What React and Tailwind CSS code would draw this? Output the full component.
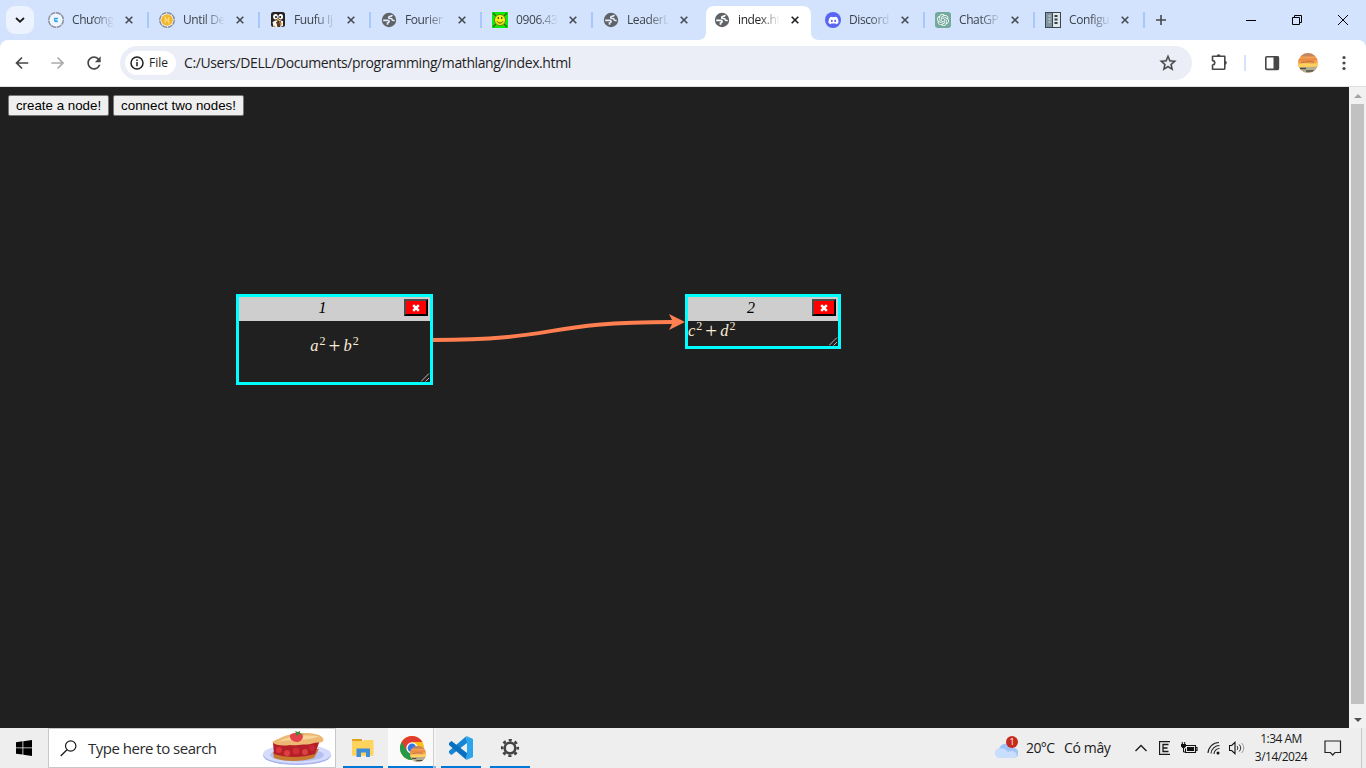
import React from "react";
import { FaDiscord } from "react-icons/fa";
import { SiOpenai } from "react-icons/si";

function Globe({ patch = "#e3ecfd" }) {
  return (
    <svg width="16" height="16" viewBox="0 0 16 16">
      <circle cx="8" cy="8" r="7.200" fill="#5f6368" />
      <path d="M2.200 8.300h4.300c1.300 0 1.600.6 1.600 1.300 0 .9-.5 1.300-1.600 1.400v1.800" fill="none" stroke={patch} strokeWidth="1.700" />
      <path d="M11.200 2.900c-.3 1-1 1.300-2 1.300-1 0-1.500.5-1.500 1.200 0 .8.600 1.100 1.500 1.100h.9c.7 0 1 .5 1 1.100s.5.900 1.100.9h1.500" fill="none" stroke={patch} strokeWidth="1.600" />
    </svg>
  );
}

function RingIcon({ children }) {
  return (
    <svg width="16" height="16" viewBox="0 0 16 16">
      <circle cx="8" cy="8" r="7" fill="#eef5ff" />
      <circle cx="8" cy="8" r="7.300" fill="none" stroke="#858b93" strokeWidth="1.400" strokeDasharray="5 .7" />
      {children}
    </svg>
  );
}

const icons = {
  chuong: (
    <RingIcon>
      <path d="M6 6.300h4M6.500 6.500c-.2 3 1.200 3.700 3.300 2.900M7.500 8.100h1.800" stroke="#36a9e8" strokeWidth="1.300" fill="none" />
    </RingIcon>
  ),
  until: (
    <RingIcon>
      <circle cx="8" cy="8" r="5.800" fill="#f5b52a" />
      <path d="M6.300 11V5.500l3.400 5V5" stroke="#fbdc7c" strokeWidth="1.300" fill="none" />
    </RingIcon>
  ),
  fuufu: (
    <svg width="16" height="16" viewBox="0 0 16 16">
      <rect x="1" y="0" width="14" height="15" rx="2.500" fill="#282223" />
      <ellipse cx="5.500" cy="4.700" rx="2.400" ry="2.700" fill="#fff" />
      <ellipse cx="10.700" cy="4.700" rx="2.300" ry="2.700" fill="#fff" />
      <path d="M2.500 10l4-2 1 2v5H3.500zM9 8l4 1v5l-3 1z" fill="#f7f3ee" />
      <circle cx="6" cy="5" r="1" fill="#111" />
      <circle cx="10.200" cy="5" r="1" fill="#111" />
      <path d="M6.500 6.500h3.300L8.500 9h-1z" fill="#e89a32" />
      <path d="M6 10l5-1-.5 5-3 .5z" fill="#5a3a26" />
      <path d="M9 10l3 1-1 3zM3 15l1.500-1.500L6 15z" fill="#d38a35" />
    </svg>
  ),
  smile: (
    <svg width="16" height="16" viewBox="0 0 16 16">
      <rect width="16" height="16" fill="#0bec10" />
      <path d="M1 1l3 3M15 1l-3 3M1 15l3-3M15 15l-3-3" stroke="#4b5a08" strokeWidth="1.400" />
      <circle cx="8" cy="8" r="5.500" fill="#f7ef18" stroke="#6c6b10" strokeWidth=".8" />
      <path d="M5 9.300c1 2.300 5 2.300 6 0" stroke="#4f430c" fill="none" />
      <path d="M6.300 5v2M9.700 5v2" stroke="#4f430c" strokeWidth="1.200" />
    </svg>
  ),
  globe: <Globe />,
  globeActive: <Globe patch="#ffffff" />,
  discord: (
    <span className="flex h-4 w-4 items-center justify-center rounded-full bg-[#5865f2]">
      <FaDiscord size={11} color="#fff" />
    </span>
  ),
  chatgpt: (
    <span className="flex h-4 w-4 items-center justify-center rounded-[3px] bg-[#74aa9c]">
      <SiOpenai size={12} color="#fff" />
    </span>
  ),
  config: (
    <svg width="16" height="16" viewBox="0 0 16 16">
      <rect x=".5" y=".5" width="15" height="15" fill="#dfe7ea" stroke="#3a4650" />
      <rect x="1" y="1" width="6" height="14" fill="#8296a0" />
      <path d="M7.500 0v16" stroke="#3a4650" />
      <path d="M3.500 4h2M3.500 7h2M3.500 10h2" stroke="#dfe7ea" />
      <path d="M9.500 4h3M9.500 7.500h3M9.500 11h3" stroke="#333f48" strokeWidth="1.800" />
    </svg>
  ),
};

const tabs = [
  { icon: "chuong", text: "Chương", sep: true, w: "w-[111px]" },
  { icon: "until", text: "Until De", sep: true, w: "w-[111px]" },
  { icon: "fuufu", text: "Fuufu Ij", sep: true, w: "w-[111px]" },
  { icon: "globe", text: "Fourier", sep: true, w: "w-[111px]" },
  { icon: "smile", text: "0906.43", sep: true, w: "w-[111px]" },
  { icon: "globe", text: "LeaderL", sep: false, w: "w-[111px]" },
  { icon: "globeActive", text: "index.ht", active: true, w: "w-[111px]" },
  { icon: "discord", text: "Discord", sep: true, w: "w-[110px]", gap: "ml-[10px]" },
  { icon: "chatgpt", text: "ChatGP", sep: true, w: "w-[110px]", gap: "ml-[10px]" },
  { icon: "config", text: "Configu", sep: true, w: "w-[110px]", gap: "ml-[10px]" },
];

function Tab({ icon, text, sep, active, w, gap = "ml-[11px]" }) {
  return (
    <div className={`relative flex h-10 shrink-0 items-center pl-[10px] ${w}`}>
      {active && (
        <svg className="absolute left-[-6px] top-[6px]" width="122" height="34" viewBox="0 0 122 34">
          <path d="M0 34c5 0 8-3 8-8V9c0-6 3-9 9-9h87c6 0 9 3 9 9v17c0 5 3 8 8 8z" fill="#fff" />
        </svg>
      )}
      <span className="relative h-4 w-4 shrink-0">{icons[icon]}</span>
      <span
        className={`relative ml-2 w-[42px] whitespace-nowrap text-[12px] leading-[18px] tracking-[-0.4px] [mask-image:linear-gradient(to_right,#000_50%,transparent)] ${
          active ? "text-[#1f1f1f]" : "text-[#3d434b]"
        }`}
      >
        {text}
      </span>
      <svg className={`relative shrink-0 ${gap}`} width="8" height="8" viewBox="0 0 8 8">
        <path d="M.7.7l6.600 6.600M7.300.7L.7 7.300" stroke={active ? "#1f1f1f" : "#474b52"} strokeWidth="1.600" />
      </svg>
      {sep && <span className="absolute right-0 top-3 h-4 w-[2px] bg-[#a8c7fa]" />}
    </div>
  );
}

function Avatar({ size }) {
  return (
    <svg width={size} height={size} viewBox="0 0 20 20">
      <clipPath id={`av${size}`}>
        <circle cx="10" cy="10" r="10" />
      </clipPath>
      <g clipPath={`url(#av${size})`}>
        <rect width="20" height="20" fill="#f2a452" />
        <rect width="20" height="3.500" fill="#c48660" />
        <path d="M0 6c6-2 13 1 20-2v3c-7 2-13 0-20 2z" fill="#ee8c46" />
        <path d="M0 11.500c8-3 14 1 20-2v4.500H0z" fill="#ffd15c" />
        <path d="M3 9.500l8-1 5 .5" stroke="#a85f3a" strokeWidth=".8" fill="none" />
        <path d="M0 14.500l20-1V20H0z" fill="#b5ad93" />
        <path d="M2 15.500h6M8 18h8" stroke="#4b5044" strokeWidth="1.300" />
      </g>
    </svg>
  );
}

function Toolbar() {
  return (
    <div className="h-[47px] bg-[#d3e2fd]">
      <div className="flex h-[47px] items-center rounded-t-[8px] border-b border-[#dedfe3] bg-white pl-3">
        <svg width="20" height="20" viewBox="0 0 24 24" fill="#474747">
          <path d="M19.500 11H7.830l4.900-4.900L11.300 4.700 4 12l7.300 7.300 1.430-1.400L7.830 13H19.500z" />
        </svg>
        <svg className="ml-4" width="20" height="20" viewBox="0 0 24 24" fill="#ababab">
          <path d="M4 11h11.670l-4.900-4.900 1.430-1.400 7.300 7.300-7.300 7.300-1.430-1.400 4.900-4.900H4z" />
        </svg>
        <svg className="ml-4" width="20" height="20" viewBox="0 0 24 24" fill="#474747">
          <path d="M17.650 6.350C16.200 4.900 14.210 4 12 4c-4.420 0-7.990 3.580-7.990 8s3.570 8 7.990 8c3.730 0 6.840-2.550 7.730-6h-2.080c-.82 2.330-3.040 4-5.650 4-3.310 0-6-2.690-6-6s2.690-6 6-6c1.660 0 3.140.69 4.220 1.780L13 11h7V4l-2.350 2.350z" />
        </svg>
        <div className="ml-4 flex h-[34px] w-[1072px] items-center rounded-full bg-[#ebeef7] pl-[5px] pr-[14px]">
          <div className="flex h-6 w-[51px] items-center rounded-full bg-white pl-[5px]">
            <svg width="14" height="14" viewBox="0 0 14 14">
              <circle cx="7" cy="7" r="6" fill="none" stroke="#1f1f1f" strokeWidth="1.500" />
              <path d="M7 6v4.300M7 3.600v1.400" stroke="#1f1f1f" strokeWidth="1.500" />
            </svg>
            <span className="ml-[5px] text-[12px] leading-4 text-[#1f1f1f]">File</span>
          </div>
          <span className="ml-2 flex-1 whitespace-nowrap text-[14px] leading-5 tracking-[-0.4px] text-[#1f1f1f]">
            C:/Users/DELL/Documents/programming/mathlang/index.html
          </span>
          <svg width="20" height="20" viewBox="0 0 24 24" fill="#474747" stroke="#474747" strokeWidth=".3">
            <path d="M22 9.240l-7.190-.62L12 2 9.190 8.630 2 9.240l5.460 4.730L5.820 21 12 17.270 18.180 21l-1.630-7.030L22 9.240zM12 15.400l-3.760 2.270 1-4.280-3.320-2.880 4.380-.38L12 6.100l1.710 4.040 4.380.38-3.320 2.880 1 4.280L12 15.400z" />
          </svg>
        </div>
        <svg className="ml-[17px]" width="20" height="20" viewBox="0 0 20 20">
          <path
            d="M3.800 3.300h12v11.900a1 1 0 0 1-1 1H3.500v-4.100a2.200 2.200 0 0 0 0-4.500V3.500z"
            fill="none"
            stroke="#474747"
            strokeWidth="1.600"
            strokeLinejoin="round"
          />
          <path d="M7.600 3.300a2 2 0 0 1 4 0zM15.800 7.700a2 2 0 0 1 0 4z" fill="#474747" />
        </svg>
        <span className="ml-[15px] h-4 w-[2px] bg-[#d3e2fd]" />
        <svg className="ml-[18px]" width="16" height="16" viewBox="0 0 16 16">
          <rect x="1.800" y="1.800" width="12.600" height="12.600" rx="1" fill="none" stroke="#474747" strokeWidth="1.600" />
          <path d="M9.500 1.500h5v13h-5z" fill="#474747" />
        </svg>
        <span className="ml-[18px]">
          <Avatar size={20} />
        </span>
        <svg className="ml-[24px]" width="4" height="16" viewBox="0 0 4 16" fill="#474747">
          <circle cx="2" cy="2.500" r="1.600" />
          <circle cx="2" cy="8" r="1.600" />
          <circle cx="2" cy="13.500" r="1.600" />
        </svg>
      </div>
    </div>
  );
}

function TabStrip() {
  return (
    <div className="flex h-10 items-center bg-[#d3e2fd] pl-[6px]">
      <span className="mr-1 flex h-7 w-7 shrink-0 items-center justify-center rounded-[9px] bg-[#ecf2fe]">
        <svg width="10" height="6" viewBox="0 0 10 6">
          <path d="M1 1l4 3.700L9 1" fill="none" stroke="#1f1f1f" strokeWidth="1.800" />
        </svg>
      </span>
      {tabs.map((t, i) => (
        <Tab key={i} {...t} />
      ))}
      <svg className="ml-[11px]" width="10" height="10" viewBox="0 0 10 10">
        <path d="M5 0v10M0 5h10" stroke="#474747" strokeWidth="1.600" />
      </svg>
      <svg className="ml-20" width="10" height="10" viewBox="0 0 10 10">
        <path d="M0 5.500h10" stroke="#000" />
      </svg>
      <svg className="ml-9" width="10" height="10" viewBox="0 0 10 10">
        <path d="M.5 2.500h7v7h-7zM2.500 2.500v-2h7v7h-2" fill="none" stroke="#000" />
      </svg>
      <svg className="ml-9" width="10" height="10" viewBox="0 0 10 10">
        <path d="M0 0l10 10M10 0L0 10" stroke="#000" />
      </svg>
    </div>
  );
}

function MathNode({ title, box, a, b, body }) {
  return (
    <div className={`absolute flex flex-col border-[3px] border-[#00ffff] bg-[#202020] ${box}`}>
      <div className="flex h-6 shrink-0 items-start bg-[#cecece]">
        <span className="flex-1 pl-[2px] text-center font-['Liberation_Serif',serif] text-[16px] italic leading-[22px] text-black">{title}</span>
        <button className="mr-[2px] mt-[2px] flex h-[17px] w-[24px] items-center justify-center border-2 border-b-black border-l-[#4c4c4c] border-r-black border-t-[#4c4c4c] bg-[#ff0000]">
          <svg width="8" height="8" viewBox="0 0 8 8">
            <path d="M1.200 1.200l5.600 5.600M6.800 1.200L1.200 6.800" stroke="#fff" strokeWidth="2.500" />
          </svg>
        </button>
      </div>
      <div className={`flex h-5 items-center font-['Liberation_Serif',serif] text-[16.500px] leading-[20px] text-[#faebd7] ${body}`}>
        <i>{a}</i>
        <sup className="-top-[5px] ml-px text-[12px] leading-none">2</sup>
        <span className="ml-[3px] mr-[3px] text-[21px] leading-5">+</span>
        <i>{b}</i>
        <sup className="-top-[5px] ml-px text-[12px] leading-none">2</sup>
      </div>
      <svg className="absolute bottom-0 right-0" width="9" height="9" viewBox="0 0 9 9">
        <path d="M0 8.500L8 .5M4.500 8.500L8 5" stroke="#c8c8c8" strokeWidth=".9" />
      </svg>
    </div>
  );
}

function PageView() {
  return (
    <div className="flex h-[641px]">
      <div className="relative flex-1 bg-[#202020] pl-2 pt-2">
        <div className="flex gap-1 font-['Liberation_Sans',Arial,sans-serif] text-[13.333px] leading-[15px] text-black">
          <button className="h-[21px] w-[101px] whitespace-nowrap rounded-[2px] border border-[#767676] bg-[#efefef]">create a node!</button>
          <button className="h-[21px] w-[131px] whitespace-nowrap rounded-[2px] border border-[#767676] bg-[#efefef]">connect two nodes!</button>
        </div>
        <svg className="absolute left-[433px] top-[220px]" width="254" height="40" viewBox="0 0 254 40">
          <path d="M0 33C126 33 110 15 240 15" fill="none" stroke="#ff7f50" strokeWidth="4" />
          <path d="M252 15l-16-8 4 8-4 8z" fill="#ff7f50" />
        </svg>
        <MathNode title="1" a="a" b="b" box="left-[236px] top-[207px] h-[91px] w-[197px]" body="mt-[15px] justify-center" />
        <MathNode title="2" a="c" b="d" box="left-[685px] top-[207px] h-[55px] w-[156px]" body="" />
      </div>
      <div className="flex w-[17px] flex-col items-center justify-between bg-[#f1f1f1]">
        <span className="flex h-[17px] items-center">
          <svg width="8" height="4" viewBox="0 0 8 4">
            <path d="M0 4l4-4 4 4z" fill="#a3a3a3" />
          </svg>
        </span>
        <span className="mb-auto h-[600px] w-[13px] bg-[#c1c1c1]" />
        <span className="flex h-[17px] items-center">
          <svg width="8" height="4" viewBox="0 0 8 4">
            <path d="M0 0l4 4 4-4z" fill="#505050" />
          </svg>
        </span>
      </div>
    </div>
  );
}

function Pie() {
  return (
    <svg width="70" height="36" viewBox="0 0 70 36">
      <ellipse cx="35" cy="25.500" rx="34" ry="9.500" fill="#a9b5ec" />
      <ellipse cx="35" cy="24" rx="34" ry="9.500" fill="#d5dcfb" />
      <ellipse cx="35" cy="25" rx="27" ry="6.500" fill="#b5c0f2" />
      <path d="M11 22l1 6c10 4 28 4 40 0l5-9z" fill="#c8792f" />
      <path d="M11 13l1 11c12 4 28 4 41 0l5-14z" fill="#b51f27" />
      <circle cx="17" cy="20" r="3" fill="#d9353b" />
      <circle cx="25" cy="23" r="3" fill="#dd4040" />
      <circle cx="34" cy="21" r="3.500" fill="#cf2e35" />
      <circle cx="43" cy="22" r="3" fill="#d94343" />
      <circle cx="50" cy="18" r="3" fill="#c92933" />
      <path d="M10 12C16 9 22 5 34 3.500c10-1 22-.5 26 3.500 3 3 1 6-3 5.500-5-.5-8 2.500-14 2-5-.5-9 1.500-15 .5-6 1-14 1-18-3z" fill="#ecb873" />
      <path d="M17 11.500c9-5.500 24-7 40-5.500-8 5-26 3-40 5.500z" fill="#f8d69b" />
      <path d="M28 5c3-3 12-3 13 1 0 3.500-3 6-6 6-4 0-8-3-7-7z" fill="#e4424b" />
      <path d="M34 3l-1-2 3 1 2-1v2l4 2-5-1-3 2z" fill="#3f8a3d" />
    </svg>
  );
}

function ChromeLogo() {
  return (
    <svg width="24" height="24" viewBox="0 0 24 24">
      <circle cx="12" cy="12" r="12" fill="#fbc116" />
      <path d="M12 12L1.600 6A12 12 0 0 0 12 24l5-9z" fill="#279847" />
      <path d="M1.600 6a12 12 0 0 1 20.800 0H12v6l-5 3z" fill="#e33b2e" />
      <circle cx="12" cy="12" r="5.700" fill="#fff" />
      <circle cx="12" cy="12" r="4.400" fill="#3478e5" />
    </svg>
  );
}

function Taskbar() {
  return (
    <div className="flex h-10 bg-[#eeeeee]">
      <div className="flex w-12 items-center justify-center">
        <svg width="16" height="16" viewBox="0 0 16 16" fill="#000">
          <path d="M0 2.200l6.500-.9v6.200H0zM7.300 1.200L16 0v7.500H7.300zM0 8.300h6.500v6.300L0 13.700zM7.300 8.300H16V16l-8.700-1.300z" />
        </svg>
      </div>
      <div className="flex w-[288px] items-center border border-[#c8c8c8] bg-white pl-[11px]">
        <svg width="17" height="17" viewBox="0 0 17 17">
          <circle cx="10.700" cy="6" r="5.200" fill="none" stroke="#1c1c1c" strokeWidth="1.200" />
          <path d="M7 9.700L.7 16" stroke="#1c1c1c" strokeWidth="1.300" />
        </svg>
        <span className="ml-[11px] flex-1 whitespace-nowrap text-[15px] leading-5 tracking-[-0.5px] text-[#2b2b2b]">Type here to search</span>
        <span className="mr-[3px]">
          <Pie />
        </span>
      </div>
      <div className="ml-[7px] flex w-10 items-center justify-center border-b-2 border-[#0078d7]">
        <svg className="mt-[2px]" width="22" height="20" viewBox="0 0 22 20">
          <path d="M0 1.500C0 1.200.500 1 1 1h9v2.500H0z" fill="#e0a31b" />
          <path d="M0 3.500L11 3.200 12 2h9.500v15.800H0z" fill="#ffd35c" />
          <path d="M4.500 10.500h13.500V19h-4v-4.500h-5V19h-4.500z" fill="#3c8edb" />
        </svg>
      </div>
      <div className="ml-[5px] flex w-[45px] items-center border-b-2 border-[#0078d7] bg-[#fafafa] pl-3">
        <span className="relative mt-[2px] block h-[24px]">
          <ChromeLogo />
          <span className="absolute left-[10px] top-[10px]">
            <Avatar size={16} />
          </span>
        </span>
      </div>
      <div className="w-[3px] border-b-2 border-l border-b-[#76b9ec] border-l-[#cfcfcf] bg-[#f4f4f4]" />
      <div className="ml-[5px] flex w-10 items-center justify-center border-b-2 border-[#0078d7]">
        <svg className="mt-[2px]" width="24" height="24" viewBox="0 0 24 24">
          <path d="M17.500 0L0 15v2l2.500 2L18 7z" fill="#1686d2" />
          <path d="M17.500 24L0 9V7l2.500-2L18 17z" fill="#0b70bd" />
          <path d="M17.500 0L24 3v18l-6.500 3c.5-.5.5-1 .5-2V2c0-1 0-1.500-.5-2z" fill="#2ba5ee" />
        </svg>
      </div>
      <div className="ml-[9px] flex w-10 items-center justify-center border-b-2 border-[#0078d7]">
        <svg className="mt-[2px]" width="20" height="20" viewBox="0 0 20 20">
          <circle cx="10" cy="10" r="5.300" fill="none" stroke="#444" strokeWidth="2.600" />
          <circle cx="10" cy="10" r="7.800" fill="none" stroke="#444" strokeWidth="2.600" strokeDasharray="3.060 3.066" strokeDashoffset="1.530" />
        </svg>
      </div>
      <div className="ml-auto flex items-center text-[#1a1a1a]">
        <span className="relative h-[20px] w-[25px]">
          <svg className="absolute bottom-0 left-0" width="24" height="16" viewBox="0 0 24 16">
            <path d="M5 16a5 5 0 0 1 0-9.500A8 8 0 0 1 19.500 6 5 5 0 0 1 19.500 16z" fill="#9fc4f7" />
            <path d="M5 16a5 5 0 0 1-2-9c5-2 9 0 11 3 3-2 8-1 9 3-.6 2-2 3-3.500 3z" fill="#c9defc" />
          </svg>
          <span className="absolute -top-[2px] right-px flex h-3 w-3 items-center justify-center rounded-full bg-[#c42b1c] text-[9px] leading-3 text-white">1</span>
        </span>
        <span className="ml-[7px] w-[38px] whitespace-nowrap text-[14px] leading-5 tracking-[-0.6px]">20°C</span>
        <span className="w-[70px] whitespace-nowrap text-[14px] leading-5 tracking-[-0.35px]">Có mây</span>
        <svg width="14" height="8" viewBox="0 0 14 8">
          <path d="M1.500 7L7 1.500 12.500 7" fill="none" stroke="#1a1a1a" strokeWidth="1.300" />
        </svg>
        <svg className="ml-[11px]" width="12" height="14" viewBox="0 0 12 14">
          <path d="M11 .5H.5v13H11M9.500 3.500H4v7h5.500M4 7h4.500" fill="none" stroke="#1a1a1a" strokeWidth="1.300" />
        </svg>
        <svg className="ml-[10px]" width="17" height="12" viewBox="0 0 17 12">
          <path d="M4.500 3.500h10v7h-10v-4M14.500 5.500h1.500v3h-1.500" fill="none" stroke="#111" strokeWidth="1.100" />
          <path d="M6 5h7v4H6zM0 2h5v2.500L3.500 6h-2L0 4.500z" fill="#111" />
          <path d="M1.300 0v2M3.700 0v2M2.500 6v4h2" stroke="#111" fill="none" />
        </svg>
        <svg className="ml-[9px]" width="15" height="14" viewBox="0 0 15 14">
          <path d="M1 12A11 11 0 0 1 12 1.500M4 12.500A8.500 8.500 0 0 1 12.500 4.500M7 13a5.500 5.500 0 0 1 5.500-5.500" fill="none" stroke="#222" strokeWidth="1.100" />
          <circle cx="11" cy="12" r="1.500" fill="#111" />
        </svg>
        <svg className="ml-[7px]" width="17" height="14" viewBox="0 0 17 14">
          <path d="M.5 4.500h2.200L6 1.300v11.400L2.700 9.500H.5z" fill="none" stroke="#111" strokeWidth="1.100" />
          <path d="M8 5c1 1 1 3 0 4M10.200 3.500c2 2 2 5 0 7" fill="none" stroke="#333" />
          <path d="M12.500 2c3 3 3 7 0 10" fill="none" stroke="#999" />
        </svg>
        <div className="ml-[6px] flex w-[58px] flex-col items-center whitespace-nowrap text-[12px] leading-[18px] tracking-[-0.5px]">
          <span>1:34 AM</span>
          <span>3/14/2024</span>
        </div>
        <svg className="ml-[14px]" width="18" height="16" viewBox="0 0 18 16">
          <path d="M1 1h15.500v11.500H11L8.700 15l-2.300-2.500H1z" fill="none" stroke="#222" strokeWidth="1.200" />
        </svg>
        <span className="ml-[19px] mr-1 h-10 w-px bg-[#c6c6c6]" />
      </div>
    </div>
  );
}

export default function App() {
  return (
    <div className="flex h-[768px] w-[1366px] flex-col overflow-hidden font-['Open_Sans','Noto_Sans',sans-serif]">
      <TabStrip />
      <Toolbar />
      <PageView />
      <Taskbar />
    </div>
  );
}
